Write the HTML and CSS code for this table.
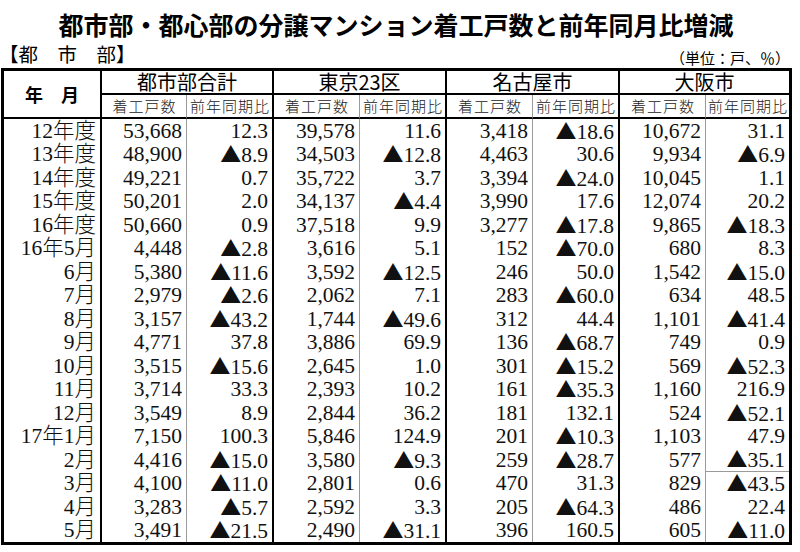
FILE: index.html
```html
<!DOCTYPE html>
<html lang="ja">
<head>
<meta charset="utf-8">
<title>都市部・都心部の分譲マンション着工戸数と前年同月比増減</title>
<link rel="stylesheet" href="styles.css">
</head>
<body>
<div class="page">
  <h1 class="title">都市部・都心部の分譲マンション着工戸数と前年同月比増減</h1>
  <div class="subhead">
    <div class="section">【都　市　部】</div>
    <div class="unit">（単位：戸、％）</div>
  </div>
  <table class="data">
    <colgroup>
      <col class="c-label">
      <col class="c-n"><col class="c-p">
      <col class="c-n2"><col class="c-p">
      <col class="c-n2"><col class="c-p">
      <col class="c-n2"><col class="c-plast">
    </colgroup>
    <thead>
      <tr>
        <th class="label" rowspan="2">年　月</th>
        <th class="group" colspan="2">都市部合計</th>
        <th class="group" colspan="2">東京23区</th>
        <th class="group" colspan="2">名古屋市</th>
        <th class="group" colspan="2">大阪市</th>
      </tr>
      <tr>
        <th class="sub first">着工戸数</th><th class="sub second">前年同期比</th>
        <th class="sub first">着工戸数</th><th class="sub second">前年同期比</th>
        <th class="sub first">着工戸数</th><th class="sub second">前年同期比</th>
        <th class="sub first">着工戸数</th><th class="sub second">前年同期比</th>
      </tr>
    </thead>
    <tbody>
      <tr><td class="rl">12年度</td><td class="first">53,668</td><td class="second">12.3</td><td class="first">39,578</td><td class="second">11.6</td><td class="first">3,418</td><td class="second"><span class="tri">▲</span>18.6</td><td class="first">10,672</td><td class="second">31.1</td></tr>
      <tr><td class="rl">13年度</td><td class="first">48,900</td><td class="second"><span class="tri">▲</span>8.9</td><td class="first">34,503</td><td class="second"><span class="tri">▲</span>12.8</td><td class="first">4,463</td><td class="second">30.6</td><td class="first">9,934</td><td class="second"><span class="tri">▲</span>6.9</td></tr>
      <tr><td class="rl">14年度</td><td class="first">49,221</td><td class="second">0.7</td><td class="first">35,722</td><td class="second">3.7</td><td class="first">3,394</td><td class="second"><span class="tri">▲</span>24.0</td><td class="first">10,045</td><td class="second">1.1</td></tr>
      <tr><td class="rl">15年度</td><td class="first">50,201</td><td class="second">2.0</td><td class="first">34,137</td><td class="second"><span class="tri">▲</span>4.4</td><td class="first">3,990</td><td class="second">17.6</td><td class="first">12,074</td><td class="second">20.2</td></tr>
      <tr><td class="rl">16年度</td><td class="first">50,660</td><td class="second">0.9</td><td class="first">37,518</td><td class="second">9.9</td><td class="first">3,277</td><td class="second"><span class="tri">▲</span>17.8</td><td class="first">9,865</td><td class="second"><span class="tri">▲</span>18.3</td></tr>
      <tr><td class="rl">16年5月</td><td class="first">4,448</td><td class="second"><span class="tri">▲</span>2.8</td><td class="first">3,616</td><td class="second">5.1</td><td class="first">152</td><td class="second"><span class="tri">▲</span>70.0</td><td class="first">680</td><td class="second">8.3</td></tr>
      <tr><td class="rl">6月</td><td class="first">5,380</td><td class="second"><span class="tri">▲</span>11.6</td><td class="first">3,592</td><td class="second"><span class="tri">▲</span>12.5</td><td class="first">246</td><td class="second">50.0</td><td class="first">1,542</td><td class="second"><span class="tri">▲</span>15.0</td></tr>
      <tr><td class="rl">7月</td><td class="first">2,979</td><td class="second"><span class="tri">▲</span>2.6</td><td class="first">2,062</td><td class="second">7.1</td><td class="first">283</td><td class="second"><span class="tri">▲</span>60.0</td><td class="first">634</td><td class="second">48.5</td></tr>
      <tr><td class="rl">8月</td><td class="first">3,157</td><td class="second"><span class="tri">▲</span>43.2</td><td class="first">1,744</td><td class="second"><span class="tri">▲</span>49.6</td><td class="first">312</td><td class="second">44.4</td><td class="first">1,101</td><td class="second"><span class="tri">▲</span>41.4</td></tr>
      <tr><td class="rl">9月</td><td class="first">4,771</td><td class="second">37.8</td><td class="first">3,886</td><td class="second">69.9</td><td class="first">136</td><td class="second"><span class="tri">▲</span>68.7</td><td class="first">749</td><td class="second">0.9</td></tr>
      <tr><td class="rl">10月</td><td class="first">3,515</td><td class="second"><span class="tri">▲</span>15.6</td><td class="first">2,645</td><td class="second">1.0</td><td class="first">301</td><td class="second"><span class="tri">▲</span>15.2</td><td class="first">569</td><td class="second"><span class="tri">▲</span>52.3</td></tr>
      <tr><td class="rl">11月</td><td class="first">3,714</td><td class="second">33.3</td><td class="first">2,393</td><td class="second">10.2</td><td class="first">161</td><td class="second"><span class="tri">▲</span>35.3</td><td class="first">1,160</td><td class="second">216.9</td></tr>
      <tr><td class="rl">12月</td><td class="first">3,549</td><td class="second">8.9</td><td class="first">2,844</td><td class="second">36.2</td><td class="first">181</td><td class="second">132.1</td><td class="first">524</td><td class="second"><span class="tri">▲</span>52.1</td></tr>
      <tr><td class="rl">17年1月</td><td class="first">7,150</td><td class="second">100.3</td><td class="first">5,846</td><td class="second">124.9</td><td class="first">201</td><td class="second"><span class="tri">▲</span>10.3</td><td class="first">1,103</td><td class="second">47.9</td></tr>
      <tr><td class="rl">2月</td><td class="first">4,416</td><td class="second"><span class="tri">▲</span>15.0</td><td class="first">3,580</td><td class="second"><span class="tri">▲</span>9.3</td><td class="first">259</td><td class="second"><span class="tri">▲</span>28.7</td><td class="first">577</td><td class="second rule"><span class="tri">▲</span>35.1</td></tr>
      <tr><td class="rl">3月</td><td class="first">4,100</td><td class="second"><span class="tri">▲</span>11.0</td><td class="first">2,801</td><td class="second">0.6</td><td class="first">470</td><td class="second">31.3</td><td class="first">829</td><td class="second"><span class="tri">▲</span>43.5</td></tr>
      <tr><td class="rl">4月</td><td class="first">3,283</td><td class="second"><span class="tri">▲</span>5.7</td><td class="first">2,592</td><td class="second">3.3</td><td class="first">205</td><td class="second"><span class="tri">▲</span>64.3</td><td class="first">486</td><td class="second">22.4</td></tr>
      <tr><td class="rl">5月</td><td class="first">3,491</td><td class="second"><span class="tri">▲</span>21.5</td><td class="first">2,490</td><td class="second"><span class="tri">▲</span>31.1</td><td class="first">396</td><td class="second">160.5</td><td class="first">605</td><td class="second"><span class="tri">▲</span>11.0</td></tr>
    </tbody>
  </table>
</div>
</body>
</html>
```

FILE: styles.css
```css
* { box-sizing: border-box; }

body {
  margin: 0;
  background: #fff;
  color: #000;
  font-family: "Noto Sans CJK JP", sans-serif;
}

.page {
  width: 792px;
}

.title {
  margin: 0;
  padding-top: 9px;
  font-size: 25px;
  font-weight: 700;
  line-height: 30px;
  text-align: center;
}

.subhead {
  display: flex;
  justify-content: space-between;
  align-items: flex-end;
  margin-top: 3px;
  height: 24px;
}

.section {
  font-size: 19.5px;
  line-height: 24px;
  margin-left: -1px;
}

.unit {
  font-size: 15px;
  line-height: 18px;
  padding-right: 2px;
  margin-bottom: -1px;
}

.data {
  margin: 2px 0 0 1px;
  width: 791px;
  table-layout: fixed;
  border-collapse: separate;
  border-spacing: 0;
  border: 3px solid #000;
}

.c-label { width: 96px; }
.c-n { width: 86px; }
.c-p { width: 86px; }
.c-n2 { width: 87px; }
.c-plast { width: 84px; }

th, td {
  padding: 0;
  white-space: nowrap;
}

th {
  font-weight: normal;
  text-align: center;
  vertical-align: middle;
}

th.label {
  font-size: 18px;
  font-weight: 700;
  border-bottom: 2px solid #000;
}

th.group {
  height: 24px;
  font-size: 20px;
  line-height: 22px;
  border-left: 2px solid #000;
  border-bottom: 2px solid #000;
}

th.sub {
  height: 24px;
  font-size: 15px;
  font-weight: 300;
  line-height: 22px;
  letter-spacing: 1px;
  text-indent: 1px;
  color: #222;
  border-bottom: 2px solid #000;
}

.first { border-left: 2px solid #000; }
.second { border-left: 1px solid #9a9a9a; }

td {
  height: 23.5px;
  font-family: "Liberation Serif", "Noto Sans CJK JP", serif;
  font-size: 21.5px;
  font-weight: 300;
  line-height: 18px;
  text-align: right;
  padding-right: 4px;
  color: #111;
  vertical-align: middle;
}

td.rl {
  padding-right: 4px;
}

td.rule {
  border-bottom: 1px solid #9a9a9a;
}

.tri {
  font-family: "Noto Sans CJK JP", sans-serif;
  font-size: 21px;
  font-weight: 400;
  line-height: 18px;
}
```
